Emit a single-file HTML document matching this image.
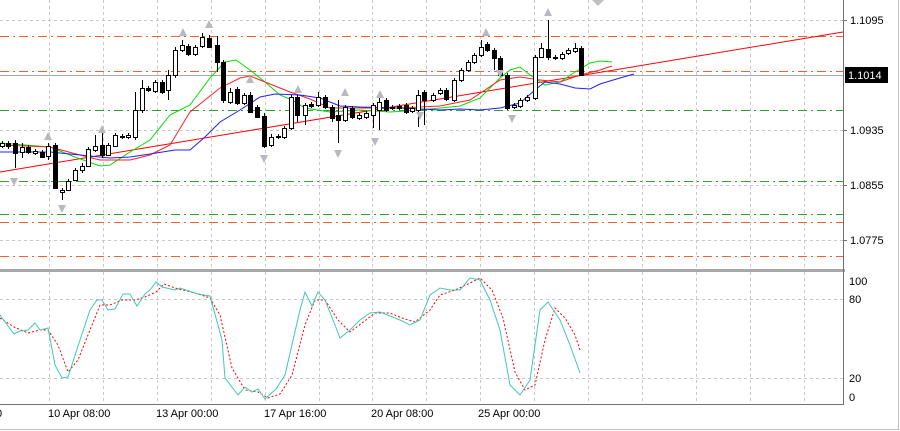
<!DOCTYPE html>
<html><head><meta charset="utf-8"><style>
html,body{margin:0;padding:0;background:#fff;width:900px;height:431px;overflow:hidden}
svg{display:block;font-family:"Liberation Sans",sans-serif;font-size:11px}
</style></head><body>
<svg id="s" width="900" height="431" xmlns="http://www.w3.org/2000/svg">
<rect width="900" height="431" fill="#fff"/>
<g id="grid" stroke="#c8c8c8" stroke-dasharray="3,3" stroke-width="1"></g>
<g stroke-width="1" fill="none" stroke-dasharray="9,4,2,4">
<line x1="0" y1="36.5" x2="843" y2="36.5" stroke="#f06030"/>
<line x1="0" y1="71.5" x2="843" y2="71.5" stroke="#f06030"/>
<line x1="0" y1="222.5" x2="843" y2="222.5" stroke="#f06030"/>
<line x1="0" y1="256.5" x2="843" y2="256.5" stroke="#f06030"/>
<line x1="0" y1="110.5" x2="843" y2="110.5" stroke="#30a030"/>
<line x1="0" y1="181.5" x2="843" y2="181.5" stroke="#30a030"/>
<line x1="0" y1="214.5" x2="843" y2="214.5" stroke="#30a030"/>
</g>
<line x1="0" y1="75.5" x2="843" y2="75.5" stroke="#a8a8a8"/>
<line x1="0" y1="172" x2="843" y2="32" stroke="#ff0000" stroke-width="1"/>
<g fill="none" stroke-width="1">
<polyline stroke="#00e000" points="0,143 50,147 75,157 100,166 110,165 130,152 150,140 170,115 190,105 210,78 225,62 236,60 250,70 265,82 280,95 292,100 305,108 330,112 360,110 390,112 420,110 440,108 460,106 480,98 500,78 510,70 520,67 530,75 545,85 560,82 575,72 590,63 600,61 612,62"/>
<polyline stroke="#ff2020" points="0,145 50,147 80,155 100,160 130,160 150,155 170,145 190,112 205,100 220,88 240,78 250,76 265,82 290,92 310,99 330,108 360,108 400,108 440,106 470,100 500,80 520,77 540,80 560,82 580,75 600,70 612,66"/>
<polyline stroke="#2020ff" points="0,152 50,152 80,155 110,158 130,157 150,154 175,150 190,150 205,137 220,122 240,110 260,97 275,94 300,95 320,98 340,106 360,107 400,108 440,110 460,109 480,110 500,108 520,103 535,90 545,82 560,84 575,88 590,89 600,84 620,78 634,74"/>
</g>
<g id="c"></g>
<g id="f" fill="#b8b8c0"></g>
<rect x="0" y="269" width="845" height="3" fill="#a8a8a8"/>
<line x1="0" y1="299.5" x2="843" y2="299.5" stroke="#c8c8c8" stroke-dasharray="3,3"/>
<line x1="0" y1="378.5" x2="843" y2="378.5" stroke="#c8c8c8" stroke-dasharray="3,3"/>
<polyline fill="none" stroke="#ff0000" stroke-dasharray="2,2" points="0,318 14,327 28,333 40,330 48,330 58,345 68,372 78,360 90,330 100,305 110,305 122,300 135,300 145,297 156,292 164,284 175,288 195,293 210,298 220,315 232,368 245,390 258,392 268,398 280,394 292,375 305,325 315,300 325,300 338,320 350,332 362,323 375,313 390,313 402,318 415,322 430,310 440,295 455,290 468,284 480,278 492,290 503,318 515,372 525,390 535,385 545,340 555,308 565,318 575,335 580,350"/>
<polyline fill="none" stroke="#40c8b8" points="0,315 14,334 20,331 28,330 35,323 40,330 48,328 55,365 62,378 68,377 80,340 90,310 97,300 102,300 108,310 115,309 123,294 130,294 137,306 145,294 150,290 156,282 162,287 175,290 180,288 198,294 210,296 222,340 225,378 238,395 245,387 252,392 258,389 265,399 276,389 285,375 300,310 305,292 312,306 318,292 325,300 335,325 340,338 350,330 360,320 370,313 380,312 390,316 400,320 410,325 420,320 430,295 440,288 450,290 460,290 470,278 480,280 490,300 500,330 510,385 520,395 530,380 540,310 548,302 560,320 570,345 580,373"/>
<line x1="0" y1="404.5" x2="844" y2="404.5" stroke="#707070"/>
<line x1="843.5" y1="0" x2="843.5" y2="405" stroke="#707070"/>
<line x1="0" y1="429.5" x2="899" y2="429.5" stroke="#c0c0c0"/>
<line x1="898.5" y1="0" x2="898.5" y2="430" stroke="#c0c0c0"/>
<g fill="#000">
<text x="850" y="24">1.1095</text>
<text x="850" y="134">1.0935</text>
<text x="850" y="189">1.0855</text>
<text x="850" y="244">1.0775</text>
<text x="849" y="285">100</text>
<text x="849" y="303">80</text>
<text x="849" y="382">20</text>
<text x="849" y="401">0</text>
</g>
<g stroke="#707070">
<line x1="843" y1="20.5" x2="847" y2="20.5"/><line x1="843" y1="130.5" x2="847" y2="130.5"/>
<line x1="843" y1="185.5" x2="847" y2="185.5"/><line x1="843" y1="240.5" x2="847" y2="240.5"/>
</g>
<rect x="845" y="67" width="43" height="16" fill="#000"/>
<text x="848" y="79" fill="#fff">1.1014</text>
<g fill="#000">
<text x="-4" y="417">0</text>
<text x="48" y="417">10 Apr 08:00</text>
<text x="156" y="417">13 Apr 00:00</text>
<text x="264" y="417">17 Apr 16:00</text>
<text x="371" y="417">20 Apr 08:00</text>
<text x="478" y="417">25 Apr 00:00</text>
</g>
<polygon points="592,0 604,0 598,6" fill="#c0c0c0"/>
</svg>
<script>
var NS="http://www.w3.org/2000/svg";
function el(p,t,a){var e=document.createElementNS(NS,t);for(var k in a)e.setAttribute(k,a[k]);p.appendChild(e);return e;}
var g=document.getElementById("grid");
for(var x=49;x<843;x+=53.9){var xx=Math.round(x)+0.5;el(g,"line",{x1:xx,y1:0,x2:xx,y2:268});el(g,"line",{x1:xx,y1:272,x2:xx,y2:404});}
[20,75,130,185,240].forEach(function(y){el(g,"line",{x1:0,y1:y+0.5,x2:843,y2:y+0.5});});
var C=[[2,143,146,0,141,148],[8,143,146,1,141,149],[15,143,153,1,140,168],[22,147,152,0,143,158],[28,147,152,1,145,154],[35,151,153,0,149,155],[42,152,157,1,150,158],[48,146,156,0,143,160],[55,145,188,1,143,189],[62,190,192,0,188,200],[68,181,190,0,179,191],[75,170,180,0,168,181],[82,166,170,0,163,173],[88,149,166,0,147,167],[95,146,150,0,135,152],[102,145,155,1,133,158],[108,145,155,0,143,156],[115,135,146,0,133,147],[122,136,137,0,134,139],[128,135,137,0,133,139],[135,110,137,0,92,140],[142,88,110,0,80,113],[148,88,90,1,86,92],[155,82,91,0,80,93],[162,82,92,1,80,94],[168,75,90,0,70,100],[175,50,75,0,47,78],[182,45,50,0,40,52],[188,46,54,1,44,56],[195,47,54,0,45,56],[202,37,46,0,33,48],[209,38,47,1,35,48],[217,45,62,1,36,72],[223,62,100,1,60,103],[230,92,102,0,88,104],[237,89,103,1,87,105],[244,95,103,0,93,105],[250,95,112,1,92,112],[257,107,117,1,105,118],[264,116,146,1,113,148],[271,137,145,0,134,147],[278,136,137,1,134,139],[284,128,137,0,126,139],[291,97,128,0,95,130],[297,97,115,1,95,122],[305,105,115,0,103,125],[311,104,106,1,102,108],[318,97,105,0,92,107],[325,97,107,1,95,109],[332,107,118,1,105,122],[338,115,120,1,100,143],[345,107,120,0,105,122],[352,108,117,1,106,119],[359,115,118,0,113,120],[366,113,117,0,111,119],[373,105,115,0,103,128],[379,102,110,0,95,130],[386,100,110,1,98,112],[392,107,108,0,105,110],[399,106,108,1,104,110],[406,105,112,1,103,114],[412,108,111,0,106,113],[418,95,110,0,90,127],[424,92,100,1,90,125],[433,95,100,0,93,102],[440,90,93,0,88,95],[446,90,99,1,88,101],[454,80,100,0,78,102],[461,70,80,0,68,82],[468,62,70,0,60,72],[474,55,62,0,53,64],[481,47,55,0,40,57],[487,44,50,1,42,52],[494,50,58,1,48,70],[500,58,75,1,56,77],[507,75,108,1,73,110],[514,105,107,0,103,109],[520,100,106,0,98,108],[527,97,100,0,95,102],[535,57,98,0,55,100],[541,48,57,0,43,58],[548,49,57,1,20,60],[555,57,58,1,55,60],[562,54,58,0,52,60],[568,50,53,0,48,55],[575,48,51,0,43,53],[581,48,75,1,46,76]];
var c=document.getElementById("c");
C.forEach(function(d){el(c,"line",{x1:d[0]+0.5,y1:d[4],x2:d[0]+0.5,y2:d[5],stroke:"#000"});
var h=Math.max(1,d[2]-d[1]);el(c,"rect",{x:d[0]-1.5,y:d[1]+0.5,width:4,height:h,fill:d[3]?"#000":"#fff",stroke:"#000"});});
var f=document.getElementById("f");
[[48,132,0],[102,125,0],[183,28,0],[209,20,0],[250,75,0],[345,88,0],[486,28,0],[548,8,0],[298,85,0],[380,90,0],[14,178,1],[62,205,1],[264,155,1],[338,150,1],[375,138,1],[420,112,1],[512,115,1],[500,70,1]].forEach(function(a){var x=a[0],y=a[1];
el(f,"polygon",{points:a[2]?(x-4)+","+y+" "+(x+4)+","+y+" "+x+","+(y+8):(x-4)+","+(y+8)+" "+(x+4)+","+(y+8)+" "+x+","+y});});
</script>
</body></html>
